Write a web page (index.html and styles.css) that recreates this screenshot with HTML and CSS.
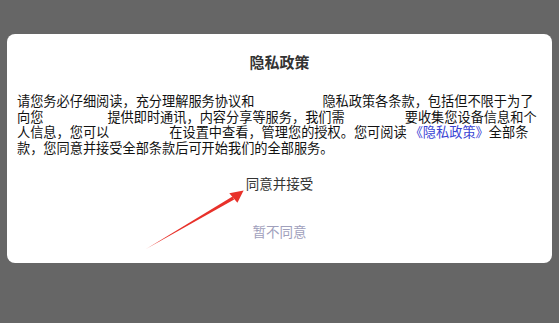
FILE: index.html
```html
<!DOCTYPE html>
<html lang="zh-CN">
<head>
    <meta charset="UTF-8" />
    <meta name="viewport" content="width=device-width, initial-scale=1.0" />
    <title>隐私政策</title>
    <link rel="stylesheet" href="styles.css">
</head>
<body>

    <div class="dialog">
        <h2 class="dialog-title">隐私政策</h2>

        <p class="dialog-text">请您务必仔细阅读，充分理解服务协议和<span class="app-name w1"></span>隐私政策各条款，包括但不限于为了向您<span class="app-name w2"></span>提供即时通讯，内容分享等服务，我们需<span class="app-name w3"></span>要收集您设备信息和个人信息，您可以<span class="app-name w3"></span>在设置中查看，管理您的授权。您可阅读 <a class="link" href="#">《隐私政策》</a>全部条款，您同意并接受全部条款后可开始我们的全部服务。</p>

        <button class="btn btn-agree" id="btn-agree">同意并接受</button>
        <button class="btn btn-refuse" id="btn-refuse">暂不同意</button>
    </div>

    <!-- 标注箭头 -->
    <svg class="arrow" width="559" height="323" viewBox="0 0 559 323">
        <polygon points="146,249 232.5,196.4 234.2,199.4" fill="#e8312a" />
        <polygon points="243.6,190.4 229.3,193.2 237.4,202.8" fill="#e8312a" />
    </svg>

</body>
</html>
```

FILE: styles.css
```css
body {
    margin: 0;
    height: 323px;
    background: #666666;
    font-family: "Noto Sans CJK SC", "DejaVu Sans", sans-serif;
    color: #222;
    position: relative;
    overflow: hidden;
}

.dialog {
    margin: 34px 7px 0;
    background: #ffffff;
    border-radius: 8px;
    padding: 18px 10px 8px;
    display: flex;
    flex-direction: column;
}

.dialog-title {
    margin: 0;
    font-size: 15px;
    line-height: 20px;
    font-weight: bold;
    color: #333;
    text-align: center;
}

.dialog-text {
    margin: 21px 0 0;
    font-size: 13.2px;
    line-height: 15.5px;
    color: #111;
}

.app-name {
    display: inline-block;
    height: 1px;
}

.w1 { width: 68px; }
.w2 { width: 64px; }
.w3 { width: 60px; }

.link {
    color: #3a44d4;
    text-decoration: none;
}

.btn {
    border: none;
    background: none;
    height: 48px;
    font-family: "Noto Sans CJK SC", "DejaVu Sans", sans-serif;
    font-size: 13.5px;
    cursor: pointer;
}

.btn-agree {
    margin-top: 4px;
    color: #333;
}

.btn-refuse {
    color: #a0a0bc;
}

.arrow {
    position: absolute;
    left: 0;
    top: 0;
    pointer-events: none;
}
```
